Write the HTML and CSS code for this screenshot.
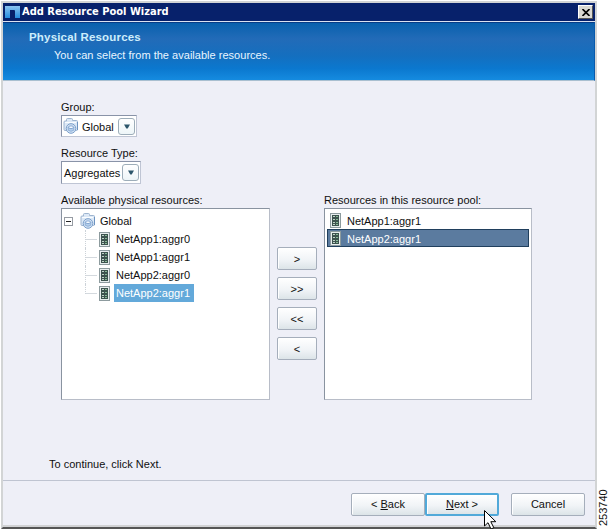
FILE: index.html
```
<!DOCTYPE html>
<html lang="en">
<head>
<meta charset="utf-8">
<title>Add Resource Pool Wizard</title>
<link rel="stylesheet" href="styles.css">
</head>
<body>
<svg class="defs" width="0" height="0" aria-hidden="true">
  <defs>
    <linearGradient id="blue" x1="0" y1="0" x2="0" y2="1"><stop offset="0" stop-color="#8cc4f0"/><stop offset="1" stop-color="#268ee0"/></linearGradient>
    <symbol id="folder" viewBox="0 0 16 16">
      <path d="M3.5 3V1.5Q3.5.5 4.5.5H8.5Q9.5.5 9.5 1.5V2.5H13.5Q14.5 2.5 14.5 3.5V11.5Q14.5 12.5 13.5 12.5H2Q1 12.5 1 11.5V4Q1 3 2 3Z" fill="#dce8f6" stroke="#9db4cf"/>
      <path d="M2 4.5H13" stroke="#fafdff"/>
      <path d="M14.5 4V12" stroke="#6d93c0"/>
      <circle cx="8" cy="10.5" r="4.8" fill="#d3e3f5" stroke="#7b9fca"/>
      <ellipse cx="8" cy="9.3" rx="2.8" ry="1.4" fill="#f5faff" stroke="#759bca" stroke-width=".8"/>
      <path d="M5.2 9.5V12.2Q8 14.5 10.8 12.2V9.5Q8 12 5.2 9.5Z" fill="#b4cfec" stroke="#759bca" stroke-width=".6"/>
    </symbol>
    <symbol id="aggregate" viewBox="0 0 11 15">
      <rect x=".5" y=".5" width="10" height="14" fill="#e8eeee" stroke="#8d9b9e"/>
      <path d="M2 2H9V13H2Z" fill="#3d534e"/>
      <path d="M3 3.5H5M6 3.5H8M3 6.5H5M6 6.5H8M3 9.5H5M6 9.5H8M3 11.5H5M6 11.5H8" stroke="#c1d2c8"/>
      <path d="M7 3V4M7 6V7M7 9V10M7 11V12" stroke="#4da060"/>
    </symbol>
  </defs>
</svg>
<div class="page">
  <main class="window">
    <div class="titlebar">
      <svg class="logo" width="15" height="12" viewBox="0 0 15 12"><path d="M0 0H15V12H10V5Q10 4 9 4H5V12H0Z" fill="url(#blue)"/></svg>
      <span class="title">Add Resource Pool Wizard</span>
      <span class="close"><svg width="8" height="7" viewBox="0 0 8 7"><path d="M.5 0L7.5 7M7.5 0L.5 7" stroke="#000" stroke-width="1.6"/></svg></span>
    </div>
    <header class="banner">
      <h1>Physical Resources</h1>
      <p>You can select from the available resources.</p>
    </header>
    <section class="content">
      <div class="label group-label">Group:</div>
      <div class="combo group"><svg width="16" height="16"><use href="#folder"/></svg><span class="combo-text">Global</span><span class="drop"><svg width="6" height="5" viewBox="0 0 6 5"><path d="M0 .5H6L3.7 4.5H2.3Z" fill="#2c566b"/></svg></span></div>
      <div class="label type-label">Resource Type:</div>
      <div class="combo type"><span class="combo-text">Aggregates</span><span class="drop"><svg width="6" height="5" viewBox="0 0 6 5"><path d="M0 .5H6L3.7 4.5H2.3Z" fill="#2c566b"/></svg></span></div>
      <div class="picker">
        <div class="column">
          <div class="label available-label">Available physical resources:</div>
          <div class="list tree">
            <div class="root"><svg class="toggle" width="9" height="9" viewBox="0 0 9 9"><rect x=".5" y=".5" width="8" height="8" fill="#fff" stroke="#969ba3"/><path d="M2 4.5H7" stroke="#222"/></svg><svg width="16" height="16"><use href="#folder"/></svg><span class="root-text">Global</span></div>
            <div class="leaf"><i class="branch"></i><svg width="11" height="15"><use href="#aggregate"/></svg><span class="name">NetApp1:aggr0</span></div>
            <div class="leaf"><i class="branch"></i><svg width="11" height="15"><use href="#aggregate"/></svg><span class="name">NetApp1:aggr1</span></div>
            <div class="leaf"><i class="branch"></i><svg width="11" height="15"><use href="#aggregate"/></svg><span class="name">NetApp2:aggr0</span></div>
            <div class="leaf last"><i class="branch"></i><svg width="11" height="15"><use href="#aggregate"/></svg><span class="name selected">NetApp2:aggr1</span></div>
          </div>
        </div>
        <div class="moves">
          <button class="button">&gt;</button>
          <button class="button">&gt;&gt;</button>
          <button class="button">&lt;&lt;</button>
          <button class="button">&lt;</button>
        </div>
        <div class="column">
          <div class="label pool-label">Resources in this resource pool:</div>
          <div class="list pool">
            <div class="row"><svg width="11" height="15"><use href="#aggregate"/></svg><span>NetApp1:aggr1</span></div>
            <div class="row active"><svg width="11" height="15"><use href="#aggregate"/></svg><span>NetApp2:aggr1</span></div>
          </div>
        </div>
      </div>
      <p class="hint">To continue, click Next.</p>
    </section>
    <footer class="footer">
      <button class="button back">&lt; <u>B</u>ack</button>
      <button class="button next"><u>N</u>ext &gt;<svg class="cursor" width="13" height="20" viewBox="0 0 13 20"><path d="M.5 .5V16L4 12.7L7 19L9.8 17.7L6.8 11.7H11.8Z" fill="#fff" stroke="#000"/></svg></button>
      <button class="button cancel">Cancel</button>
    </footer>
  </main>
  <aside class="figure-number">253740</aside>
</div>
</body>
</html>
```
FILE: styles.css
```
* { box-sizing: border-box; }
body { margin: 0; background: #fff; color: #101010; font: 11px/14px "Liberation Sans", Arial, sans-serif; }
h1, p { margin: 0; }
svg { display: block; flex: none; }
.defs { position: absolute; }
.page { display: flex; height: 529px; padding: 1px 0 0 1px; overflow: hidden; }
.window { display: flex; flex-direction: column; flex: none; width: 596px; height: 528px; border: 2px solid #d2d4d5; border-bottom: 2px solid #555; background: #eeeff7; white-space: nowrap; }
.titlebar { display: flex; align-items: center; height: 19px; flex: none; padding: 0 2px; background: #07216b; border-bottom: 1px solid #dce2f0; color: #fff; }
.title { margin-left: 2px; font: bold 11px/16px "DejaVu Sans Condensed", "DejaVu Sans", sans-serif; flex: 1; }
.close { display: grid; place-items: center; width: 15px; height: 14px; background: #d9d8d2; border: 1px solid; border-color: #fff #555 #555 #fff; }
.banner { height: 59px; flex: none; padding: 7px 0 0 26px; color: #e9f5ff; background: linear-gradient(#0961ad, #226bb8 28%, #146fbf 58%, #0b78cf 80%, #158be0); border-top: 1px solid #073c87; border-bottom: 1px solid #a9bfd0; border-right: 1px solid #075aad; }
.banner h1 { font-size: 11.5px; line-height: 14px; letter-spacing: .18px; color: #cdeefc; }
.banner p { margin: 4px 0 0 25px; letter-spacing: .02px; }
.content { height: 399px; flex: none; padding: 19px 0 0 58px; }
.label { height: 14px; }
.combo { display: flex; align-items: center; margin-top: 1px; border: 1px solid #8993a8; border-right-color: #bfc5d4; border-bottom-color: #bfc5d4; background: #fff; }
.group { width: 76px; height: 22px; padding-left: 1px; }
.group .combo-text { width: 36px; margin-left: 3px; padding-top: 1px; }
.type { width: 80px; height: 23px; padding-left: 2px; }
.type .combo-text { width: 58px; }
.type-label { margin-top: 9px; }
.drop { display: grid; place-items: center; width: 17px; height: 17px; border: 1px solid #9dadb9; border-radius: 3px; background: linear-gradient(#fff, #edf5f8); }
.picker { display: flex; align-items: flex-start; margin-top: 9px; }
.list { width: 209px; height: 192px; margin-top: 1px; border: 1px solid #8993a0; border-right-color: #b8bdc8; border-bottom-color: #b8bdc8; background: #fff; }
.tree { padding-top: 3px; }
.root { display: flex; align-items: center; height: 18px; padding-left: 2px; }
.root .toggle { margin-right: 7px; }
.root-text { margin-left: 4px; }
.leaf { display: flex; align-items: center; height: 18px; padding-left: 23px; }
.branch { width: 14px; height: 18px; background: linear-gradient(#d4d9de, #d4d9de) 0 9px / 11px 1px no-repeat; border-left: 1px dotted #ccd2d8; }
.last .branch { height: 10px; align-self: flex-start; background-position: 0 9px; }
.name { height: 18px; line-height: 19px; padding: 0 4px 0 2px; margin-left: 4px; }
.selected { background: #63a9da; color: #fff; }
.moves { display: flex; flex-direction: column; gap: 7px; width: 40px; margin: 54px 7px 0; }
.button { display: flex; align-items: center; justify-content: center; height: 23px; padding: 0 0 1px; color: #111; font: 11px/14px "Liberation Sans", Arial, sans-serif; border: 1px solid #a5aebb; border-radius: 2px; background: linear-gradient(#fff, #f1f4f7 55%, #dce4e8); box-shadow: inset 1px 1px #fff; }
.moves .button { padding: 1px 0 0; }
.pool { width: 208px; padding: 2px; }
.row { display: flex; align-items: center; height: 18px; padding-left: 3px; }
.row span { margin-left: 6px; line-height: 14px; padding-top: 1px; }
.active { background: #5b7b9f; outline: 1px solid #203f5d; outline-offset: -1px; color: #fff; }
.hint { margin: 57px 0 0 -12px; }
.footer { display: flex; align-items: flex-start; flex: 1; border-top: 1px solid #bfc4d1; border-bottom: 2px solid #d1d2d4; padding: 12px 0 0 348px; }
.footer .button { width: 74px; white-space: pre; }
.next { position: relative; border: 2px solid #51a9d9; }
.footer .cancel { margin-left: 12px; }
.cursor { position: absolute; left: 57px; top: 15px; }
.figure-number { align-self: flex-end; height: 39px; margin-bottom: 1px; writing-mode: vertical-rl; transform: rotate(180deg); font: 11px/13px "Liberation Sans", Arial, sans-serif; text-align: end; }
```
